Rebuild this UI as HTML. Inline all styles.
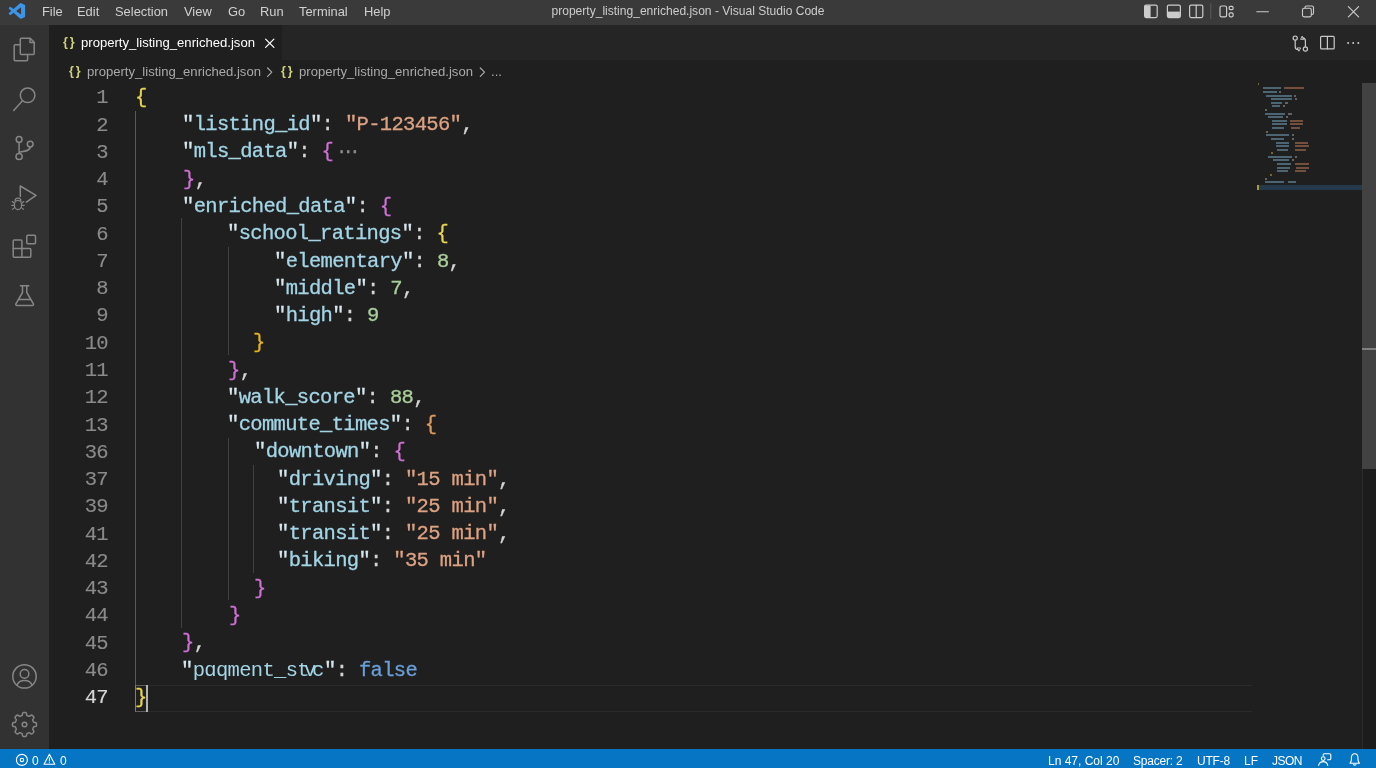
<!DOCTYPE html>
<html><head><meta charset="utf-8"><title>property_listing_enriched.json - Visual Studio Code</title>
<style>
*{box-sizing:border-box;margin:0;padding:0}
html,body{width:1376px;height:768px;overflow:hidden;background:#1f1f1f;font-family:"Liberation Sans",sans-serif;}
#app{position:relative;width:1376px;height:768px;overflow:hidden;background:#1f1f1f}
.abs{position:absolute}
span,#title{will-change:transform}
#titlebar{left:0;top:0;width:1376px;height:25px;background:#3a3a3a;color:#cccccc;font-size:13px}
#titlebar .menu{position:absolute;top:0;height:25px;line-height:23px;font-size:12.9px;color:#d0d0d0}
#title{position:absolute;top:0;left:0;width:1376px;text-align:center;height:25px;line-height:23px;font-size:12.05px;color:#cccccc}
#activity{left:0;top:25px;width:49px;height:724px;background:#323232}
#tabbar{left:49px;top:25px;width:1327px;height:35px;background:#252525}
#tab{left:49px;top:25px;width:233px;height:35px;background:#1f1f1f;color:#ffffff;font-size:13.1px}
#crumbs{left:49px;top:60px;width:1327px;height:24px;background:#1f1f1f;color:#a9a9a9;font-size:13.1px}
#editor{left:49px;top:84px;width:1327px;height:665px;background:#1f1f1f}
#status{left:0;top:749px;width:1376px;height:19px;background:#0575c4;color:#fff;font-size:12px}
.ln{position:absolute;will-change:transform;left:0;width:108px;text-align:right;color:#8a8a8a;font-family:"Liberation Mono",monospace;font-size:20.5px;letter-spacing:-0.67px;-webkit-text-stroke:0.12px currentColor;margin-top:0.4px;height:27px;line-height:27px}
.cl{position:absolute;will-change:transform;white-space:pre;color:#d4d4d4;font-family:"Liberation Mono",monospace;font-size:20.5px;letter-spacing:-0.67px;-webkit-text-stroke:0.3px currentColor;height:27px;line-height:27px}
.k{color:#a3d5e6}.s{color:#dca283}.n{color:#a9cf9b}.y{color:#e8d44d}.p{color:#d070d6}.o{color:#e09a5a}.b{color:#6a9fd8}.q{color:#d6e6ec}.w{color:#d4d4d4}
.y2{color:#e6b422}.dots{color:#8f8f8f;letter-spacing:-4.2px;font-size:18px;margin-left:3px}
.ln.cur{color:#d6d6d6}
.g{position:absolute;width:1px;background:#404040}
</style></head><body>
<div id="app">
<div id="titlebar" class="abs">
 <div id="title">property_listing_enriched.json - Visual Studio Code</div>
 <span class="menu" style="left:42px">File</span>
 <span class="menu" style="left:77px">Edit</span>
 <span class="menu" style="left:115px">Selection</span>
 <span class="menu" style="left:184px">View</span>
 <span class="menu" style="left:228px">Go</span>
 <span class="menu" style="left:260px">Run</span>
 <span class="menu" style="left:299px">Terminal</span>
 <span class="menu" style="left:364px">Help</span>
</div>
<div id="activity" class="abs"></div>
<div id="tabbar" class="abs"></div>
<div id="tab" class="abs"><span class="abs" style="left:13px;top:0;line-height:34px;color:#d2d27a;font-size:12.5px;font-weight:bold;letter-spacing:1.8px;margin-left:0.8px;margin-top:-0.5px">{}</span><span class="abs" style="left:32px;top:0;line-height:35px;white-space:pre">property_listing_enriched.json</span></div>
<div id="crumbs" class="abs"><span class="abs" style="left:19px;top:0;line-height:23px;color:#d2d27a;font-size:12.5px;font-weight:bold;letter-spacing:1.8px;margin-left:0.8px;margin-top:-0.5px">{}</span><span class="abs" style="left:38px;top:0;line-height:23px;white-space:pre">property_listing_enriched.json</span><span class="abs" style="left:231px;top:0;line-height:23px;color:#d2d27a;font-size:12.5px;font-weight:bold;letter-spacing:1.8px;margin-left:0.8px;margin-top:-0.5px">{}</span><span class="abs" style="left:250px;top:0;line-height:23px;white-space:pre">property_listing_enriched.json</span><span class="abs" style="left:442px;top:0;line-height:23px">...</span></div>
<div id="editor" class="abs">
<div class="g" style="left:86.0px;top:27.0px;height:574.0px;background:#5a5a5a"></div>
<div class="g" style="left:132.3px;top:134.0px;height:410.0px;background:#404040"></div>
<div class="g" style="left:178.7px;top:162.5px;height:108.5px;background:#404040"></div>
<div class="g" style="left:178.7px;top:353.5px;height:162.5px;background:#404040"></div>
<div class="g" style="left:203.8px;top:380.5px;height:108.5px;background:#404040"></div>
<div class="abs" style="left:86.0px;top:600.5px;width:1117.0px;height:27.5px;border-top:1px solid #2b2b2b;border-bottom:1px solid #2b2b2b"></div>
<div class="abs" style="left:86.0px;top:600.5px;width:13.0px;height:27.5px;border:1px solid #5e5e5e;border-left-color:#808080"></div>
<div class="abs" style="left:97.3px;top:601.0px;width:2px;height:26.5px;background:#b4b4b4"></div>
<div class="ln" style="top:-0.10px;left:-49px">1</div>
<div class="cl" id="L1" style="top:-0.10px;left:85.8px"><span class="y">{</span></div>
<div class="ln" style="top:27.17px;left:-49px">2</div>
<div class="cl" id="L2" style="top:27.17px;left:132.7px"><span class="q">"</span><span class="k">listing_id</span><span class="q">"</span>: <span class="s">"P-123456"</span>,</div>
<div class="ln" style="top:54.44px;left:-49px">3</div>
<div class="cl" id="L3" style="top:54.44px;left:132.7px"><span class="q">"</span><span class="k">mls_data</span><span class="q">"</span>: <span class="p">{</span><span class="dots">···</span></div>
<div class="ln" style="top:81.71px;left:-49px">4</div>
<div class="cl" id="L4" style="top:81.71px;left:133.8px"><span class="p">}</span>,</div>
<div class="ln" style="top:108.98px;left:-49px">5</div>
<div class="cl" id="L5" style="top:108.98px;left:132.7px"><span class="q">"</span><span class="k">enriched_data</span><span class="q">"</span>: <span class="p">{</span></div>
<div class="ln" style="top:136.25px;left:-49px">6</div>
<div class="cl" id="L6" style="top:136.25px;left:178.3px"><span class="q">"</span><span class="k">school_ratings</span><span class="q">"</span>: <span class="y">{</span></div>
<div class="ln" style="top:163.52px;left:-49px">7</div>
<div class="cl" id="L7" style="top:163.52px;left:225.3px"><span class="q">"</span><span class="k">elementary</span><span class="q">"</span>: <span class="n">8</span>,</div>
<div class="ln" style="top:190.79px;left:-49px">8</div>
<div class="cl" id="L8" style="top:190.79px;left:225.3px"><span class="q">"</span><span class="k">middle</span><span class="q">"</span>: <span class="n">7</span>,</div>
<div class="ln" style="top:218.06px;left:-49px">9</div>
<div class="cl" id="L9" style="top:218.06px;left:225.3px"><span class="q">"</span><span class="k">high</span><span class="q">"</span>: <span class="n">9</span></div>
<div class="ln" style="top:245.33px;left:-49px">10</div>
<div class="cl" id="L10" style="top:245.33px;left:204.4px"><span class="y2">}</span></div>
<div class="ln" style="top:272.60px;left:-49px">11</div>
<div class="cl" id="L11" style="top:272.60px;left:179.4px"><span class="p">}</span>,</div>
<div class="ln" style="top:299.87px;left:-49px">12</div>
<div class="cl" id="L12" style="top:299.87px;left:178.3px"><span class="q">"</span><span class="k">walk_score</span><span class="q">"</span>: <span class="n">88</span>,</div>
<div class="ln" style="top:327.14px;left:-49px">13</div>
<div class="cl" id="L13" style="top:327.14px;left:178.3px"><span class="q">"</span><span class="k">commute_times</span><span class="q">"</span>: <span class="o">{</span></div>
<div class="ln" style="top:354.41px;left:-49px">36</div>
<div class="cl" id="L36" style="top:354.41px;left:204.5px"><span class="q">"</span><span class="k">downtown</span><span class="q">"</span>: <span class="p">{</span></div>
<div class="ln" style="top:381.68px;left:-49px">37</div>
<div class="cl" id="L37" style="top:381.68px;left:228.2px"><span class="q">"</span><span class="k">driving</span><span class="q">"</span>: <span class="s">"15 min"</span>,</div>
<div class="ln" style="top:408.95px;left:-49px">39</div>
<div class="cl" id="L39" style="top:408.95px;left:228.2px"><span class="q">"</span><span class="k">transit</span><span class="q">"</span>: <span class="s">"25 min"</span>,</div>
<div class="ln" style="top:436.22px;left:-49px">41</div>
<div class="cl" id="L41" style="top:436.22px;left:228.2px"><span class="q">"</span><span class="k">transit</span><span class="q">"</span>: <span class="s">"25 min"</span>,</div>
<div class="ln" style="top:463.49px;left:-49px">42</div>
<div class="cl" id="L42" style="top:463.49px;left:228.2px"><span class="q">"</span><span class="k">biking</span><span class="q">"</span>: <span class="s">"35 min"</span></div>
<div class="ln" style="top:490.76px;left:-49px">43</div>
<div class="cl" id="L43" style="top:490.76px;left:204.9px"><span class="p">}</span></div>
<div class="ln" style="top:518.03px;left:-49px">44</div>
<div class="cl" id="L44" style="top:518.03px;left:179.8px"><span class="p">}</span></div>
<div class="ln" style="top:545.30px;left:-49px">45</div>
<div class="cl" id="L45" style="top:545.30px;left:132.9px"><span class="p">}</span>,</div>
<div class="ln" style="top:572.57px;left:-49px">46</div>
<div class="cl" id="L46" style="top:572.57px;left:132.3px"><span class="q">"</span><span class="k" style="-webkit-text-stroke:0">pɑqment_s<span style="letter-spacing:-5.6px">t</span><span style="letter-spacing:-4.4px">v</span><span style="letter-spacing:-0.2px">c</span></span><span class="q">"</span>: <span class="b">false</span></div>
<div class="ln cur" style="top:599.84px;left:-49px">47</div>
<div class="cl" id="L47" style="top:599.84px;left:86.4px"><span class="y">}</span></div>
</div>
<div id="status" class="abs">
 <span class="abs" style="left:32.3px;top:0;line-height:25px">0</span>
 <span class="abs" style="left:60.3px;top:0;line-height:25px">0</span>
 <span class="abs" style="left:1048px;top:0;line-height:25px;white-space:pre">Ln 47, Col 20</span>
 <span class="abs" style="left:1133.3px;top:0;line-height:25px;white-space:pre;letter-spacing:-0.2px">Spacer: 2</span>
 <span class="abs" style="left:1197px;top:0;line-height:25px;letter-spacing:-0.2px">UTF-8</span>
 <span class="abs" style="left:1243.8px;top:0;line-height:25px">LF</span>
 <span class="abs" style="left:1272px;top:0;line-height:25px;letter-spacing:-0.5px">JSON</span>
</div>
<div class="abs" style="left:1257.5px;top:185px;width:104.5px;height:5px;background:#24394c"></div>
<div class="abs" style="left:1257.3px;top:185px;width:1.8px;height:5px;background:#a89a3a"></div>
<div class="abs" style="left:1257.5px;top:83.3px;width:1.5px;height:2.0px;background:#b8a830;opacity:0.55"></div>
<div class="abs" style="left:1263.3px;top:87.2px;width:18.0px;height:2.0px;background:#6f9fb8;opacity:0.55"></div>
<div class="abs" style="left:1283.6px;top:87.2px;width:20.3px;height:2.0px;background:#b87858;opacity:0.55"></div>
<div class="abs" style="left:1263.3px;top:90.8px;width:14.0px;height:2.0px;background:#6f9fb8;opacity:0.55"></div>
<div class="abs" style="left:1279.0px;top:90.8px;width:2.0px;height:2.0px;background:#9a9a9a;opacity:0.55"></div>
<div class="abs" style="left:1266.4px;top:94.5px;width:25.8px;height:2.0px;background:#6f9fb8;opacity:0.55"></div>
<div class="abs" style="left:1294.0px;top:94.5px;width:2.0px;height:2.0px;background:#9a9a9a;opacity:0.55"></div>
<div class="abs" style="left:1271.0px;top:97.8px;width:21.0px;height:2.0px;background:#6f9fb8;opacity:0.55"></div>
<div class="abs" style="left:1294.5px;top:97.8px;width:2.5px;height:2.0px;background:#9a9a9a;opacity:0.55"></div>
<div class="abs" style="left:1271.0px;top:101.5px;width:11.0px;height:2.0px;background:#6f9fb8;opacity:0.55"></div>
<div class="abs" style="left:1285.0px;top:101.5px;width:3.0px;height:2.0px;background:#9a9a9a;opacity:0.55"></div>
<div class="abs" style="left:1272.0px;top:105.4px;width:8.0px;height:2.0px;background:#6f9fb8;opacity:0.55"></div>
<div class="abs" style="left:1283.0px;top:105.4px;width:2.0px;height:2.0px;background:#9a9a9a;opacity:0.55"></div>
<div class="abs" style="left:1265.0px;top:109.3px;width:2.0px;height:2.0px;background:#9a9a9a;opacity:0.55"></div>
<div class="abs" style="left:1264.8px;top:112.9px;width:20.2px;height:2.0px;background:#6f9fb8;opacity:0.55"></div>
<div class="abs" style="left:1288.0px;top:112.9px;width:4.0px;height:2.0px;background:#9a9a9a;opacity:0.55"></div>
<div class="abs" style="left:1268.0px;top:116.0px;width:14.8px;height:2.0px;background:#6f9fb8;opacity:0.55"></div>
<div class="abs" style="left:1285.5px;top:116.0px;width:2.0px;height:2.0px;background:#9a9a9a;opacity:0.55"></div>
<div class="abs" style="left:1271.9px;top:120.0px;width:14.8px;height:2.0px;background:#6f9fb8;opacity:0.55"></div>
<div class="abs" style="left:1289.8px;top:120.0px;width:13.2px;height:2.0px;background:#b87858;opacity:0.55"></div>
<div class="abs" style="left:1271.9px;top:123.4px;width:14.8px;height:2.0px;background:#6f9fb8;opacity:0.55"></div>
<div class="abs" style="left:1289.8px;top:123.4px;width:13.2px;height:2.0px;background:#b87858;opacity:0.55"></div>
<div class="abs" style="left:1271.9px;top:127.3px;width:11.7px;height:2.0px;background:#6f9fb8;opacity:0.55"></div>
<div class="abs" style="left:1290.6px;top:127.3px;width:9.4px;height:2.0px;background:#b87858;opacity:0.55"></div>
<div class="abs" style="left:1266.0px;top:130.6px;width:2.0px;height:2.0px;background:#9a9a9a;opacity:0.55"></div>
<div class="abs" style="left:1265.6px;top:134.3px;width:23.4px;height:2.0px;background:#6f9fb8;opacity:0.55"></div>
<div class="abs" style="left:1291.5px;top:134.3px;width:2.0px;height:2.0px;background:#9a9a9a;opacity:0.55"></div>
<div class="abs" style="left:1271.0px;top:138.0px;width:13.4px;height:2.0px;background:#6f9fb8;opacity:0.55"></div>
<div class="abs" style="left:1291.5px;top:138.0px;width:2.0px;height:2.0px;background:#9a9a9a;opacity:0.55"></div>
<div class="abs" style="left:1275.8px;top:141.5px;width:13.2px;height:2.0px;background:#6f9fb8;opacity:0.55"></div>
<div class="abs" style="left:1295.3px;top:141.5px;width:12.5px;height:2.0px;background:#b87858;opacity:0.55"></div>
<div class="abs" style="left:1275.8px;top:145.3px;width:13.2px;height:2.0px;background:#6f9fb8;opacity:0.55"></div>
<div class="abs" style="left:1295.3px;top:145.3px;width:13.3px;height:2.0px;background:#b87858;opacity:0.55"></div>
<div class="abs" style="left:1277.3px;top:148.9px;width:11.0px;height:2.0px;background:#6f9fb8;opacity:0.55"></div>
<div class="abs" style="left:1294.5px;top:148.9px;width:11.0px;height:2.0px;background:#b87858;opacity:0.55"></div>
<div class="abs" style="left:1270.5px;top:152.0px;width:2.0px;height:2.0px;background:#b8a830;opacity:0.55"></div>
<div class="abs" style="left:1268.0px;top:155.9px;width:24.2px;height:2.0px;background:#6f9fb8;opacity:0.55"></div>
<div class="abs" style="left:1294.5px;top:155.9px;width:2.0px;height:2.0px;background:#9a9a9a;opacity:0.55"></div>
<div class="abs" style="left:1272.7px;top:159.3px;width:16.3px;height:2.0px;background:#6f9fb8;opacity:0.55"></div>
<div class="abs" style="left:1292.0px;top:159.3px;width:2.0px;height:2.0px;background:#9a9a9a;opacity:0.55"></div>
<div class="abs" style="left:1276.6px;top:162.9px;width:14.0px;height:2.0px;background:#6f9fb8;opacity:0.55"></div>
<div class="abs" style="left:1295.3px;top:162.9px;width:13.3px;height:2.0px;background:#b87858;opacity:0.55"></div>
<div class="abs" style="left:1276.6px;top:166.7px;width:13.2px;height:2.0px;background:#6f9fb8;opacity:0.55"></div>
<div class="abs" style="left:1296.0px;top:166.7px;width:13.4px;height:2.0px;background:#b87858;opacity:0.55"></div>
<div class="abs" style="left:1276.6px;top:170.3px;width:11.7px;height:2.0px;background:#6f9fb8;opacity:0.55"></div>
<div class="abs" style="left:1294.5px;top:170.3px;width:11.0px;height:2.0px;background:#b87858;opacity:0.55"></div>
<div class="abs" style="left:1269.5px;top:173.9px;width:2.0px;height:2.0px;background:#b8a830;opacity:0.55"></div>
<div class="abs" style="left:1265.0px;top:177.8px;width:2.0px;height:2.0px;background:#9a9a9a;opacity:0.55"></div>
<div class="abs" style="left:1264.8px;top:181.4px;width:18.8px;height:2.0px;background:#6f9fb8;opacity:0.55"></div>
<div class="abs" style="left:1287.5px;top:181.4px;width:8.5px;height:2.0px;background:#6f9fb8;opacity:0.55"></div>
<div class="abs" style="left:1362px;top:82.5px;width:14px;height:666.5px;background:#1c1c1c;border-left:1px solid #2b2b2b"></div>
<div class="abs" style="left:1362px;top:82.5px;width:14px;height:386.3px;background:#424242"></div>
<div class="abs" style="left:1362px;top:348.3px;width:14px;height:1.6px;background:#808080"></div>
<svg class="abs" style="left:0;top:0" width="1376" height="768" viewBox="0 0 1376 768" fill="none" stroke-linecap="round" stroke-linejoin="round">
<g transform="translate(8.7,3.0) scale(0.685,0.66)"><path fill="#3c95e6" d="M23.15 2.587L18.21.21a1.494 1.494 0 0 0-1.705.29l-9.46 8.63-4.12-3.128a.999.999 0 0 0-1.276.057L.327 7.261A1 1 0 0 0 .326 8.74L3.899 12 .326 15.26a1 1 0 0 0 .001 1.479L1.65 17.94a.999.999 0 0 0 1.276.057l4.12-3.128 9.46 8.63a1.492 1.492 0 0 0 1.704.29l4.942-2.377A1.5 1.5 0 0 0 24 20.06V3.939a1.5 1.5 0 0 0-.85-1.352zm-5.146 14.861L10.826 12l7.178-5.448v10.896z"/></g>
<g stroke="#868686" stroke-width="1.5">
<path d="M21.3 38.2H30.2L34.2 42.2V53.5a1 1 0 0 1-1 1H21.3a1 1 0 0 1-1-1V39.2a1 1 0 0 1 1-1z"/><path d="M30 38.6V42.4H33.9"/>
<path d="M20.1 44.7H15.2a1 1 0 0 0-1 1V59.8a1 1 0 0 0 1 1H26.6a1 1 0 0 0 1-1V54.8"/>
<circle cx="27.6" cy="95.3" r="7.3"/><path d="M22.3 100.9L13.7 110.5"/>
<circle cx="19.1" cy="139.5" r="2.9"/><circle cx="19.1" cy="156.5" r="3.1"/><circle cx="30.2" cy="144.1" r="2.9"/><path d="M19.1 142.5V153.3"/><path d="M30.2 147.1C30.2 151 24.5 151.3 19.4 152.2"/>
<path d="M20.3 196.6V186L36 195.4L26.4 202.2"/>
<g stroke-width="1.2"><ellipse cx="18" cy="205" rx="3.6" ry="4.6"/><path d="M15 201.2a3 3 0 0 1 6 0"/><path d="M14.4 203.2L12.2 201.6M14.3 205.4H11.8M14.6 207.6L12.4 209.4M21.6 203.2L23.8 201.6M21.7 205.4H24.2M21.4 207.6L23.6 209.4"/></g>
<path d="M14.2 239.9H20.9a1 1 0 0 1 1 1V248.6H29.8a1 1 0 0 1 1 1V256.3a1 1 0 0 1-1 1H14.2a1 1 0 0 1-1-1V240.9a1 1 0 0 1 1-1z"/><path d="M21.9 248.6V257.3M13.2 248.6H21.9"/><rect x="26.8" y="235.2" width="8.7" height="8.5" rx="1"/>
<path d="M20.4 285.8H28.8M22.5 285.8V292.5L15.9 303.9a1 1 0 0 0 .9 1.5H32.5a1 1 0 0 0 .9-1.5L26.8 292.5V285.8M18.5 299.6H30.8"/>
<circle cx="24.5" cy="676.4" r="11.7"/><circle cx="24.5" cy="673.9" r="4.3"/><path d="M16.9 685.2C18.2 681.6 21 680.4 24.5 680.4C28 680.4 30.8 681.6 32.1 685.2"/>
<path d="M36.50 724.50 L36.49 725.09 L36.44 725.68 L36.16 726.23 L34.95 726.58 L33.73 726.81 L33.40 727.20 L33.26 727.63 L33.09 728.06 L32.91 728.48 L32.70 728.88 L32.66 729.39 L33.36 730.42 L33.97 731.52 L33.78 732.11 L33.39 732.56 L32.99 732.99 L32.56 733.39 L32.11 733.78 L31.52 733.97 L30.42 733.36 L29.39 732.66 L28.88 732.70 L28.48 732.91 L28.06 733.09 L27.63 733.26 L27.20 733.40 L26.81 733.73 L26.58 734.95 L26.23 736.16 L25.68 736.44 L25.09 736.49 L24.50 736.50 L23.91 736.49 L23.32 736.44 L22.77 736.16 L22.42 734.95 L22.19 733.73 L21.80 733.40 L21.37 733.26 L20.94 733.09 L20.52 732.91 L20.12 732.70 L19.61 732.66 L18.58 733.36 L17.48 733.97 L16.89 733.78 L16.44 733.39 L16.01 732.99 L15.61 732.56 L15.22 732.11 L15.03 731.52 L15.64 730.42 L16.34 729.39 L16.30 728.88 L16.09 728.48 L15.91 728.06 L15.74 727.63 L15.60 727.20 L15.27 726.81 L14.05 726.58 L12.84 726.23 L12.56 725.68 L12.51 725.09 L12.50 724.50 L12.51 723.91 L12.56 723.32 L12.84 722.77 L14.05 722.42 L15.27 722.19 L15.60 721.80 L15.74 721.37 L15.91 720.94 L16.09 720.52 L16.30 720.12 L16.34 719.61 L15.64 718.58 L15.03 717.48 L15.22 716.89 L15.61 716.44 L16.01 716.01 L16.44 715.61 L16.89 715.22 L17.48 715.03 L18.58 715.64 L19.61 716.34 L20.12 716.30 L20.52 716.09 L20.94 715.91 L21.37 715.74 L21.80 715.60 L22.19 715.27 L22.42 714.05 L22.77 712.84 L23.32 712.56 L23.91 712.51 L24.50 712.50 L25.09 712.51 L25.68 712.56 L26.23 712.84 L26.58 714.05 L26.81 715.27 L27.20 715.60 L27.63 715.74 L28.06 715.91 L28.48 716.09 L28.88 716.30 L29.39 716.34 L30.42 715.64 L31.52 715.03 L32.11 715.22 L32.56 715.61 L32.99 716.01 L33.39 716.44 L33.78 716.89 L33.97 717.48 L33.36 718.58 L32.66 719.61 L32.70 720.12 L32.91 720.52 L33.09 720.94 L33.26 721.37 L33.40 721.80 L33.73 722.19 L34.95 722.42 L36.16 722.77 L36.44 723.32 L36.49 723.91 L36.50 724.50Z"/><circle cx="24.5" cy="724.5" r="2.3"/>
</g>
<g stroke="#cccccc" stroke-width="1.2">
<rect x="1144.6" y="5.1" width="12.6" height="12.5" rx="1.5"/><path d="M1145 5.6h5.6v11.5h-5.6z" fill="#cccccc" stroke="none"/>
<rect x="1167.4" y="5.1" width="13" height="12.5" rx="1.5"/><path d="M1167.9 11.6h12v5.5h-12z" fill="#cccccc" stroke="none"/>
<rect x="1189.6" y="5.1" width="13.2" height="12.5" rx="1.5"/><path d="M1196.2 5.3V17.4"/>
<path d="M1210.8 3.8V18.6" stroke="#5c5c5c" stroke-width="1"/>
<rect x="1220" y="6" width="6.6" height="10.9" rx="1.6"/><rect x="1229.2" y="6.3" width="3.9" height="3.4" rx="1.2"/><rect x="1229.2" y="12.9" width="3.9" height="3.9" rx="1.2"/>
<path d="M1256.8 11.8H1268.4" stroke-width="1.1"/>
<rect x="1302.5" y="8.3" width="8.8" height="8.6" rx="1.6" stroke-width="1.1"/><path d="M1305 8V7.4a1.4 1.4 0 0 1 1.4-1.4H1311.9a1.6 1.6 0 0 1 1.6 1.6V13a1.4 1.4 0 0 1-1.4 1.4H1311.6" stroke-width="1.1"/>
<path d="M1348.4 6.6L1358.6 16.8M1358.6 6.6L1348.4 16.8" stroke-width="1.15"/>
</g>
<g stroke="#c8c8c8" stroke-width="1.2">
<circle cx="1295.2" cy="38.1" r="2.1"/><path d="M1295.2 40.4V46.5Q1295.2 49.7 1298 49.7"/><path d="M1297.6 47.9L1300.6 47.9L1299.1 50.9Z" stroke-width="0.9"/>
<circle cx="1305.4" cy="49" r="2.1"/><path d="M1305.4 46.8V41Q1305.4 37.8 1302.6 37.8"/><path d="M1300.6 36.6L1303.4 36.6L1302 39.6Z" stroke-width="0.9" transform="rotate(180 1302 38)"/>
<rect x="1320.6" y="36.4" width="13.6" height="12.5" rx="1"/><path d="M1327.4 36.6V48.8"/>
<g fill="#c8c8c8" stroke="none"><circle cx="1348.1" cy="43" r="1"/><circle cx="1353.2" cy="43" r="1"/><circle cx="1358.3" cy="43" r="1"/></g>
</g>
<path d="M265.6 39.1L273.9 47.4M273.9 39.1L265.6 47.4" stroke="#ffffff" stroke-width="1.25"/>
<path d="M267.6 68L271.8 72.2L267.6 76.4M480.3 68L484.5 72.2L480.3 76.4" stroke="#a9a9a9" stroke-width="1.2"/>
<g stroke="#ffffff" stroke-width="1.1">
<circle cx="21.9" cy="759.9" r="5.5"/><circle cx="21.9" cy="759.9" r="1.7"/>
<path d="M49.4 754.2L54.8 764.3H44L49.4 754.2Z"/><path d="M49.4 757.8V761M49.4 762.6V762.7" stroke-width="1"/>
<path d="M1323.2 755.5Q1322.8 753.6 1324.8 753.8H1329Q1331 753.6 1330.8 755.5V758Q1331 759.8 1329 759.7H1327.6"/><circle cx="1323.2" cy="758.6" r="1.9"/><path d="M1318.6 765.5Q1319.4 761.6 1323.2 761.6Q1327 761.6 1327.8 765.5"/>
<path d="M1350 763.2H1359.4Q1358 761.6 1358 759.5V758Q1358 753.8 1354.7 753.8Q1351.4 753.8 1351.4 758V759.5Q1351.4 761.6 1350 763.2ZM1353.4 764.6Q1354.7 765.8 1356 764.6"/>
</g>
</svg>
</div>
</body></html>
